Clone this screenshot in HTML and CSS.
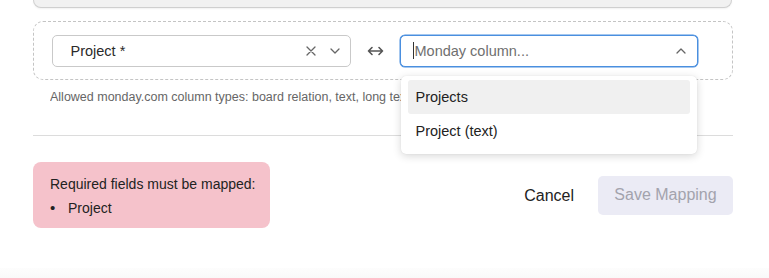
FILE: index.html
```html
<!DOCTYPE html>
<html>
<head>
<meta charset="utf-8">
<link rel="stylesheet" href="styles.css">
</head>
<body>
<div class="page">
  <div class="prev-card"></div>
  <div class="mapping-row">
    <div class="select select-source">
      <span class="select-value">Project *</span>
      <span class="select-icons">
        <svg class="icon-x" width="10" height="10" viewBox="0 0 10 10"><path d="M1 1 L9 9 M9 1 L1 9" stroke="#666" stroke-width="1.3" fill="none" stroke-linecap="round"/></svg>
        <svg class="icon-chev" width="10" height="6" viewBox="0 0 10 6"><path d="M1 1 L5 5 L9 1" stroke="#666" stroke-width="1.3" fill="none" stroke-linecap="round" stroke-linejoin="round"/></svg>
      </span>
    </div>
    <div class="arrow">
      <svg width="17" height="12" viewBox="0 0 17 12"><path d="M1.5 6 H15.5 M5 2.5 L1.5 6 L5 9.5 M12 2.5 L15.5 6 L12 9.5" stroke="#555" stroke-width="1.6" fill="none" stroke-linecap="round" stroke-linejoin="round"/></svg>
    </div>
    <div class="select-wrap">
      <div class="select select-target">
        <span class="caret"></span>
        <span class="placeholder">Monday column...</span>
        <svg class="icon-chev-up" width="10" height="6" viewBox="0 0 10 6"><path d="M1 5 L5 1 L9 5" stroke="#666" stroke-width="1.3" fill="none" stroke-linecap="round" stroke-linejoin="round"/></svg>
      </div>
      <div class="menu">
        <div class="option option-active">Projects</div>
        <div class="option">Project (text)</div>
      </div>
    </div>
  </div>
  <p class="helper">Allowed monday.com column types: board relation, text, long text</p>
  <hr class="divider">
  <div class="actions">
    <div class="error-box">
      <div class="error-title">Required fields must be mapped:</div>
      <ul class="error-list"><li>Project</li></ul>
    </div>
    <div class="buttons">
      <button class="btn btn-cancel">Cancel</button>
      <button class="btn btn-save" disabled>Save Mapping</button>
    </div>
  </div>
</div>
<div class="footer-strip"></div>
</body>
</html>
```

FILE: styles.css
```css
* { box-sizing: border-box; }
html, body { margin: 0; padding: 0; background: #fff; }
body {
  font-family: "Liberation Sans", Arial, sans-serif;
  color: #222;
  width: 769px;
  height: 278px;
  overflow: hidden;
  position: relative;
}
.page {
  width: 700px;
  margin-left: 33px;
}
.prev-card {
  height: 8px;
  margin-right: 1px;
  background: #f1f1f1;
  border: 1px solid #cfcfcf;
  border-top: none;
  border-radius: 0 0 10px 10px;
  box-shadow: 0 1px 2px rgba(0,0,0,0.06);
}
.mapping-row {
  margin-top: 13px;
  height: 59px;
  border: 1.5px dashed #c4c4c4;
  border-radius: 10px;
  display: flex;
  align-items: center;
  padding-left: 17.5px;
}
.select {
  height: 32px;
  border-radius: 5px;
  background: #fff;
  display: flex;
  align-items: center;
  font-size: 14.5px;
}
.select-source {
  width: 299px;
  border: 1px solid #c9c9c9;
  padding-left: 18px;
  padding-right: 8px;
  color: #2a2a2a;
}
.select-value { flex: 1; }
.select-icons {
  display: flex;
  align-items: center;
  gap: 14px;
  margin-right: 2px;
}
.arrow {
  width: 49px;
  display: flex;
  justify-content: center;
  align-items: center;
  padding-top: 1px;
}
.select-wrap {
  position: relative;
  width: 298px;
}
.select-target {
  border: 1px solid #4a8fdf;
  box-shadow: 0 0 0 0.5px #4a8fdf;
  padding-left: 12px;
  padding-right: 11px;
  color: #6f6f6f;
}
.caret {
  width: 1px;
  height: 17px;
  background: #333;
  margin-right: 1px;
}
.placeholder { flex: 1; }
.menu {
  position: absolute;
  left: 1px;
  top: 41px;
  width: 296px;
  background: #fff;
  border-radius: 5px;
  box-shadow: 0 2px 8px rgba(0,0,0,0.16), 0 0 1px rgba(0,0,0,0.12);
  padding: 4px 7px 6px 7px;
  z-index: 5;
}
.option {
  height: 34px;
  line-height: 34px;
  padding-left: 8px;
  font-size: 14.5px;
  color: #222;
  border-radius: 3px;
}
.option-active { background: #f0f0f0; }
.helper {
  margin: 9px 0 0 17px;
  font-size: 12.5px;
  line-height: 16px;
  color: #666;
  white-space: nowrap;
  overflow: hidden;
}
.divider {
  margin: 30px 0 0 0;
  border: none;
  border-top: 1px solid #dcdcdc;
  height: 0;
}
.actions {
  margin-top: 26px;
  display: flex;
  justify-content: space-between;
  align-items: center;
}
.error-box {
  width: 237px;
  height: 66px;
  background: #f5c2cb;
  border-radius: 8px;
  padding: 12px 10px 0 17px;
  font-size: 14px;
  color: #222;
}
.error-title { line-height: 20px; }
.error-list {
  margin: 4px 0 0 0;
  padding-left: 0;
  list-style: none;
  line-height: 20px;
}
.error-list li::before {
  content: "•";
  display: inline-block;
  width: 18px;
  font-size: 15px;
}
.buttons {
  display: flex;
  align-items: center;
  gap: 8px;
}
.btn {
  font-family: "Liberation Sans", Arial, sans-serif;
  font-size: 16px;
  border: none;
  background: transparent;
  height: 39px;
  border-radius: 5px;
}
.btn-cancel {
  color: #222;
  padding: 0 16px;
  margin-top: 2px;
}
.btn-save {
  width: 135px;
  background: #ebebf5;
  color: #a3a3ad;
  padding: 0;
}
.footer-strip {
  position: absolute;
  left: 0;
  right: 0;
  bottom: 0;
  height: 10px;
  background: linear-gradient(#fdfdfd, #f9f9f9);
}
```
